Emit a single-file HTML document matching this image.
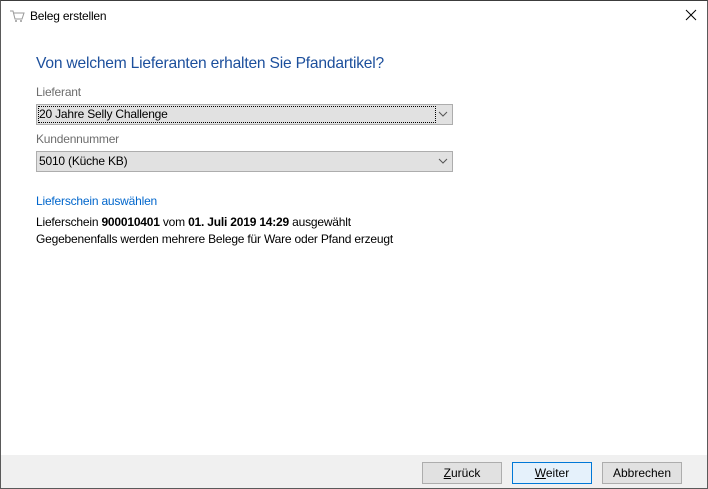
<!DOCTYPE html>
<html><head><meta charset="utf-8"><style>
body{margin:0;width:708px;height:489px;position:relative;background:#fff;font-family:"Liberation Sans",sans-serif;font-size:12px;color:#000;overflow:hidden}
.win{position:absolute;left:0;top:0;width:706px;height:487px;border:1px solid #5a5a5a;border-top-color:#3c3c3c}
.t{position:absolute;white-space:nowrap;letter-spacing:-0.2px}
.combo{position:absolute;left:36px;width:415px;height:19px;background:#e1e1e1;border:1px solid #adadad}
.combo span{position:absolute;left:2px;top:2px;letter-spacing:-0.2px}
.foot{position:absolute;left:1px;top:455px;width:706px;height:33px;background:#f0f0f0}
.btn{position:absolute;top:462px;width:78px;height:20px;background:#e1e1e1;border:1px solid #adadad;text-align:center;line-height:20px}
</style></head><body>
<div class="win"></div>
<svg style="position:absolute;left:9px;top:9px" width="16" height="14"><path d="M1 2h3l2 8h7l2-6H5" stroke="#999" fill="none"/><circle cx="7" cy="12" r="1" fill="#999"/><circle cx="12" cy="12" r="1" fill="#999"/></svg>
<div class="t" style="left:30px;top:9px">Beleg erstellen</div>
<svg style="position:absolute;left:685px;top:9px" width="12" height="12"><path d="M1 1L11 11M11 1L1 11" stroke="#000"/></svg>
<div class="t" style="left:36px;top:55px;font-size:15.6px;color:#1c4f9c">Von welchem Lieferanten erhalten Sie Pfandartikel?</div>
<div class="t" style="left:36px;top:85px;color:#6d6d6d">Lieferant</div>
<div class="combo" style="top:104px"><div style="position:absolute;left:1px;top:1px;width:396px;height:15px;border:1px dotted #000"></div><span>20 Jahre Selly Challenge</span></div>
<svg style="position:absolute;left:438px;top:111px" width="10" height="6"><path d="M1 1l4 4 4-4" stroke="#555" fill="none"/></svg>
<div class="t" style="left:36px;top:132px;color:#6d6d6d">Kundennummer</div>
<div class="combo" style="top:151px"><span>5010 (Küche KB)</span></div>
<svg style="position:absolute;left:438px;top:158px" width="10" height="6"><path d="M1 1l4 4 4-4" stroke="#555" fill="none"/></svg>
<div class="t" style="left:36px;top:194px;color:#0066cc">Lieferschein auswählen</div>
<div class="t" style="left:36px;top:215px">Lieferschein <b>900010401</b> vom <b>01. Juli 2019 14:29</b> ausgewählt</div>
<div class="t" style="left:36px;top:232px">Gegebenenfalls werden mehrere Belege für Ware oder Pfand erzeugt</div>
<div class="foot"></div>
<div class="btn" style="left:422px"><u>Z</u>urück</div>
<div class="btn" style="left:512px;background:#e5f1fb;border-color:#0078d7"><u>W</u>eiter</div>
<div class="btn" style="left:602px">Abbrechen</div>
</body></html>
